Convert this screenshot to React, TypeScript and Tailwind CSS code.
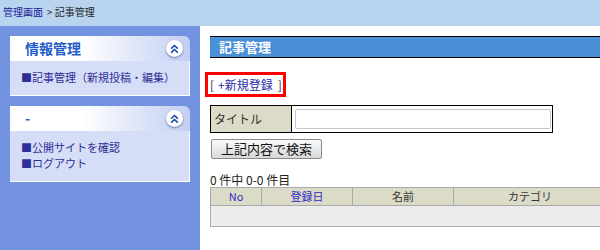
import React from 'react';

const ChevronButton = () => (
    <span className="flex h-[17px] w-[17px] items-center justify-center rounded-full bg-white shadow-[0_1px_2px_rgba(40,60,120,0.6)]">
        <svg width="9" height="10" viewBox="0 0 9 10" fill="none" stroke="#1848b0" strokeWidth="1.6">
            <path d="M1.2 4.6 L4.5 1.5 L7.8 4.6" />
            <path d="M1.2 8.6 L4.5 5.5 L7.8 8.6" />
        </svg>
    </span>
);

// Sidebar box with gradient header and light body
const SideBox = ({ title, items }: { title: string; items: string[] }) => (
    <div className="w-[180px]">
        <div className="flex h-[25px] items-center justify-between rounded-tr-[6px] bg-gradient-to-r from-white from-40% to-[#c2cef2] pl-[15px] pr-[7px]">
            <span className="text-[14px] font-bold text-[#1f5cc8]">{title}</span>
            <ChevronButton />
        </div>
        <div className="border-b border-r border-white bg-[#d6def7] px-[11px] pb-[10px] pt-[8px] leading-[16px] text-[11px] text-[#2e2e96]">
            {items.map((item) => (
                <div key={item}>■{item}</div>
            ))}
        </div>
    </div>
);

const App = () => {
    return (
        <div className="flex h-[250px] w-[600px] flex-col overflow-hidden bg-white font-['Noto_Sans_CJK_JP','Liberation_Sans',sans-serif]">
            {/* Breadcrumb */}
            <div className="flex h-[26px] shrink-0 items-center bg-[#b9d4ef] pl-[3px] pb-[3px] text-[10px] text-[#222]">
                <span className="text-[#22229a]">管理画面</span>
                <span className="ml-[4px]">&gt; 記事管理</span>
            </div>

            <div className="flex flex-1">
                {/* Sidebar */}
                <div className="flex w-[200px] shrink-0 flex-col gap-[10px] bg-[#7392df] p-[10px]">
                    <SideBox title="情報管理" items={['記事管理（新規投稿・編集）']} />
                    <SideBox title="-" items={['公開サイトを確認', 'ログアウト']} />
                </div>

                {/* Main */}
                <div className="flex w-[400px] shrink-0 flex-col pl-[10px] pt-[10px] text-[#333]">
                    <div className="flex h-[22px] w-[400px] items-center border-y border-black bg-[#4a90d6] pl-[9px] text-[13px] font-bold text-white">
                        記事管理
                    </div>

                    <div className="mt-[14px] -ml-[5px] flex h-[25px] w-[81px] items-center border-[3px] border-[#ff0000] pl-[2px] text-[12px]">
                        <span>[</span>
                        <span className="ml-[4px] text-[#2b2ba8]">+新規登録</span>
                        <span className="ml-[5px]">]</span>
                    </div>

                    <div className="mt-[8px] flex h-[28px] w-[343px] border border-black">
                        <div className="flex w-[81px] items-center border-r border-black bg-[#dcdbc8] pl-[3px] text-[12px]">
                            タイトル
                        </div>
                        <div className="flex flex-1 items-center pl-[3px]">
                            <input className="h-[20px] w-[256px] rounded-[2px] border border-[#c8c8c8] bg-white outline-none" />
                        </div>
                    </div>

                    <button className="mt-[6px] ml-[1px] h-[20px] w-[111px] rounded-[2px] border border-[#8a8a8a] bg-gradient-to-b from-[#fafafa] to-[#d8d8d8] text-[13px] leading-[18px] text-[#111]">
                        上記内容で検索
                    </button>

                    <div className="mt-[13px] text-[12px] leading-[15px] text-[#222]">0 件中 0-0 件目</div>

                    <div className="w-[410px] shrink-0 border border-[#aaa] text-[11px]">
                        <div className="flex h-[18px] items-center border-b border-[#aaa] bg-[#dcdbc8]">
                            <div className="w-[51px] border-r border-[#aaa] text-center text-[#2b2bc0]">No</div>
                            <div className="w-[91px] border-r border-[#aaa] text-center text-[#2b2bc0]">登録日</div>
                            <div className="w-[101px] border-r border-[#aaa] text-center">名前</div>
                            <div className="w-[152px] text-center">カテゴリ</div>
                        </div>
                        <div className="h-[20px] bg-[#ececec]" />
                    </div>
                </div>
            </div>
        </div>
    );
};

export default App;
